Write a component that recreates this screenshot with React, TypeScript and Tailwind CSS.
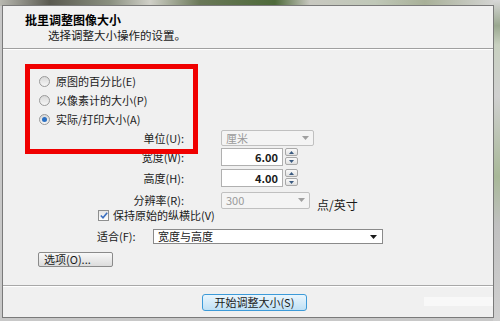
import React from "react";

const font = { fontFamily: '"Noto Sans CJK SC", "Noto Sans", sans-serif' };

function Radio({ checked }: { checked?: boolean }) {
  return (
    <span className="relative inline-block h-[11px] w-[11px] rounded-full border border-[#9a9a9a] bg-gradient-to-b from-[#d8d8d8] to-[#f6f6f6]">
      {checked && (
        <span className="absolute left-[2px] top-[2px] h-[5px] w-[5px] rounded-full bg-[#2a6fc2]" />
      )}
    </span>
  );
}

function Spinner() {
  return (
    <div className="ml-[2px] flex h-[18px] w-[13px] flex-col gap-[1px]">
      <div className="flex h-[8px] items-center justify-center rounded-[2px] border border-[#a8a8a8] bg-gradient-to-b from-[#fafafa] to-[#e0e0e0]">
        <svg width="5" height="3" viewBox="0 0 5 3"><path d="M0 3 L2.5 0 L5 3 Z" fill="#3a5a80" /></svg>
      </div>
      <div className="flex h-[8px] items-center justify-center rounded-[2px] border border-[#a8a8a8] bg-gradient-to-b from-[#fafafa] to-[#e0e0e0]">
        <svg width="5" height="3" viewBox="0 0 5 3"><path d="M0 0 L2.5 3 L5 0 Z" fill="#3a5a80" /></svg>
      </div>
    </div>
  );
}

export default function App() {
  return (
    <div className="relative h-[321px] w-[500px] overflow-hidden bg-[#c8c8c8]" style={font}>
      {/* background photo strip */}
      <div className="absolute left-0 top-0 h-[6px] w-[500px] bg-[linear-gradient(90deg,#b8b8b0_0%,#5a5a50_10%,#8a9080_22%,#d0d0c8_30%,#6a7858_40%,#4e6a3a_55%,#c8c8c0_62%,#c0c8b8_75%,#a8b098_85%,#d8d8d8_100%)]" />
      <div className="absolute right-0 top-0 h-[321px] w-[7px] bg-[linear-gradient(180deg,#d8d8d8_0%,#9aa890_8%,#c8d0c0_14%,#d0d0d0_30%,#a8b898_55%,#c0c0c0_70%,#d0d0d0_100%)]" />

      <div className="absolute left-[2px] top-[5px] flex h-[313px] w-[492px] flex-col border border-[#7a7a7a] bg-[#f0f0f0] text-[11px] text-[#1a1a1a]">
        {/* header */}
        <div className="h-[43px] border-b border-[#a0a0a0] bg-[#f1f1f1] pl-[22px] pt-[6px]">
          <div className="text-[12px] font-bold leading-[16px] text-black">批里调整图像大小</div>
          <div className="pl-[23px] text-[11.5px] leading-[14px]">选择调整大小操作的设置。</div>
        </div>
        <div className="h-px bg-white" />

        <div className="flex flex-col pt-[22px]">
          {/* radios */}
          <div className="flex h-[19px] items-center gap-[6px] pl-[36px]">
            <Radio />
            <span>原图的百分比(E)</span>
          </div>
          <div className="flex h-[19px] items-center gap-[6px] pl-[36px]">
            <Radio />
            <span>以像素计的大小(P)</span>
          </div>
          <div className="flex h-[19px] items-center gap-[6px] pl-[36px]">
            <Radio checked />
            <span>实际/打印大小(A)</span>
          </div>

          {/* 单位 */}
          <div className="mt-[1px] flex h-[16px] items-center">
            <span className="w-[181px] text-right">单位(U):</span>
            <div className="ml-[37px] flex h-[16px] w-[93px] items-center justify-between rounded-[2px] border border-[#c0c0c0] bg-[#f4f4f4] px-[4px] text-[#9a9a9a]">
              <span>厘米</span>
              <svg width="7" height="4" viewBox="0 0 7 4"><path d="M0 0 L3.5 4 L7 0 Z" fill="#a0a0a0" /></svg>
            </div>
          </div>

          {/* 宽度 */}
          <div className="mt-[2px] flex h-[18px] items-center">
            <span className="w-[181px] text-right">宽度(W):</span>
            <div className="ml-[37px] flex h-[18px] w-[62px] items-center justify-end border border-[#b0b0b0] bg-white pr-[4px] font-bold">6.00</div>
            <Spinner />
          </div>

          {/* 高度 */}
          <div className="mt-[3px] flex h-[18px] items-center">
            <span className="w-[181px] text-right">高度(H):</span>
            <div className="ml-[37px] flex h-[18px] w-[62px] items-center justify-end border border-[#b0b0b0] bg-white pr-[4px] font-bold">4.00</div>
            <Spinner />
          </div>

          {/* 分辨率 */}
          <div className="mt-[5px] flex h-[16px] items-center">
            <span className="w-[181px] text-right">分辨率(R):</span>
            <div className="ml-[37px] flex h-[17px] w-[89px] items-center justify-between rounded-[2px] border border-[#c0c0c0] bg-[#f4f4f4] px-[4px] text-[#9a9a9a]">
              <span>300</span>
              <svg width="7" height="4" viewBox="0 0 7 4"><path d="M0 0 L3.5 4 L7 0 Z" fill="#a0a0a0" /></svg>
            </div>
            <span className="ml-[7px] mt-[10px] text-[12px]">点/英寸</span>
          </div>

          {/* checkbox */}
          <div className="flex h-[14px] items-center gap-[4px] pl-[95px]">
            <span className="flex h-[11px] w-[11px] items-center justify-center border border-[#8e8f8f] bg-gradient-to-b from-[#e6e6e6] to-white">
              <svg width="8" height="7" viewBox="0 0 8 7"><path d="M0.8 3.5 L3 5.8 L7.2 0.8" stroke="#3b6fc0" strokeWidth="1.6" fill="none" /></svg>
            </span>
            <span>保持原始的纵横比(V)</span>
          </div>

          {/* 适合 */}
          <div className="mt-[7px] flex h-[15px] items-center pl-[94px]">
            <span className="w-[56px]">适合(F):</span>
            <div className="flex h-[15px] w-[230px] items-center justify-between border border-[#8a8a8a] bg-white pl-[4px] pr-[5px]">
              <span>宽度与高度</span>
              <svg width="7" height="4" viewBox="0 0 7 4"><path d="M0 0 L3.5 4 L7 0 Z" fill="#1a1a1a" /></svg>
            </div>
          </div>

          {/* 选项 */}
          <div className="mt-[8px] pl-[35px]">
            <div className="flex h-[15px] w-[75px] items-center rounded-[2px] border border-[#8a8a8a] bg-gradient-to-b from-[#f8f8f8] to-[#dcdcdc] pl-[5px]">
              选项(O)...
            </div>
          </div>
        </div>

        {/* footer */}
        <div className="mt-[18px] h-px bg-[#a8a8a8]" />
        <div className="h-px bg-white" />
        <div className="flex flex-1 items-start pt-[7px]">
          <div className="ml-[199px] flex h-[17px] w-[106px] items-center justify-center rounded-[3px] border border-[#3c9ad8] bg-gradient-to-b from-[#eaf6fd] to-[#bfe0f5]">
            开始调整大小(S)
          </div>
          <div className="ml-[117px] mt-[3px] h-[9px] w-[70px] bg-[#f8f8f8]" />
        </div>
      </div>

      {/* red annotation box */}
      <div className="absolute left-[25px] top-[64px] h-[90px] w-[173px] border-[5px] border-[#f00000]" />
    </div>
  );
}
